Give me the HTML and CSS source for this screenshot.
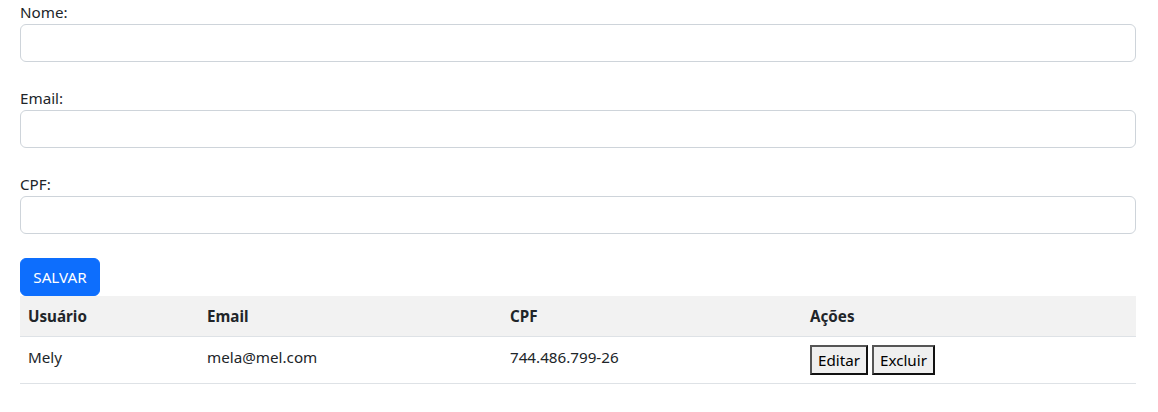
FILE: index.html
```html
<!DOCTYPE html>
<html lang="pt">
<head>
<meta charset="utf-8">
<title>Cadastro</title>
<link rel="stylesheet" href="styles.css">
</head>
<body>
<div class="page">
  <form class="form">
    <div class="field">
      <label class="label">Nome:</label>
      <input class="input" type="text">
    </div>
    <div class="field">
      <label class="label">Email:</label>
      <input class="input" type="text">
    </div>
    <div class="field">
      <label class="label">CPF:</label>
      <input class="input" type="text">
    </div>
    <button type="button" class="btn-primary">SALVAR</button>
  </form>
  <table class="table">
    <thead>
      <tr>
        <th class="c1">Usuário</th>
        <th class="c2">Email</th>
        <th class="c3">CPF</th>
        <th class="c4">Ações</th>
      </tr>
    </thead>
    <tbody>
      <tr>
        <td>Mely</td>
        <td>mela@mel.com</td>
        <td>744.486.799-26</td>
        <td><div class="actions"><button type="button" class="btn-plain">Editar</button><button type="button" class="btn-plain">Excluir</button></div></td>
      </tr>
    </tbody>
  </table>
</div>
</body>
</html>
```

FILE: styles.css
```css
* { box-sizing: border-box; }
html, body { margin: 0; padding: 0; background: #fff; }
body {
  font-family: "Noto Sans", "Segoe UI", "Liberation Sans", sans-serif;
  font-size: 15.2px;
  line-height: 24px;
  color: #212529;
}
.page {
  width: 1116px;
  margin-left: 20px;
}
.form { display: flex; flex-direction: column; align-items: flex-start; }
.field { width: 100%; display: flex; flex-direction: column; margin-bottom: 24px; }
.label { display: block; height: 24px; }
.input {
  width: 100%;
  height: 38px;
  border: 1px solid #ced4da;
  border-radius: 6px;
  padding: 6px 12px;
  font: inherit;
  background: #fff;
}
.btn-primary {
  height: 38px;
  width: 80px;
  background: #0d6efd;
  color: #fff;
  border: 1px solid #0d6efd;
  border-radius: 6px;
  padding: 6px 12px;
  font: inherit;
}
.table {
  width: 100%;
  border-collapse: collapse;
  table-layout: fixed;
}
.table th, .table td {
  text-align: left;
  padding: 8px;
  border-bottom: 1px solid #dee2e6;
  vertical-align: top;
}
.table thead tr { background: #f2f2f2; }
.table th { font-weight: 700; }
.c1 { width: 179px; }
.c2 { width: 303px; }
.c3 { width: 300px; }
.actions { display: flex; gap: 4px; }
.btn-plain {
  font: inherit;
  line-height: 24px;
  color: #000;
  background: #efefef;
  border: 2px solid #333;
  border-color: #555 #111 #111 #555;
  padding: 1px 6px;
  height: 30px;
}
```
